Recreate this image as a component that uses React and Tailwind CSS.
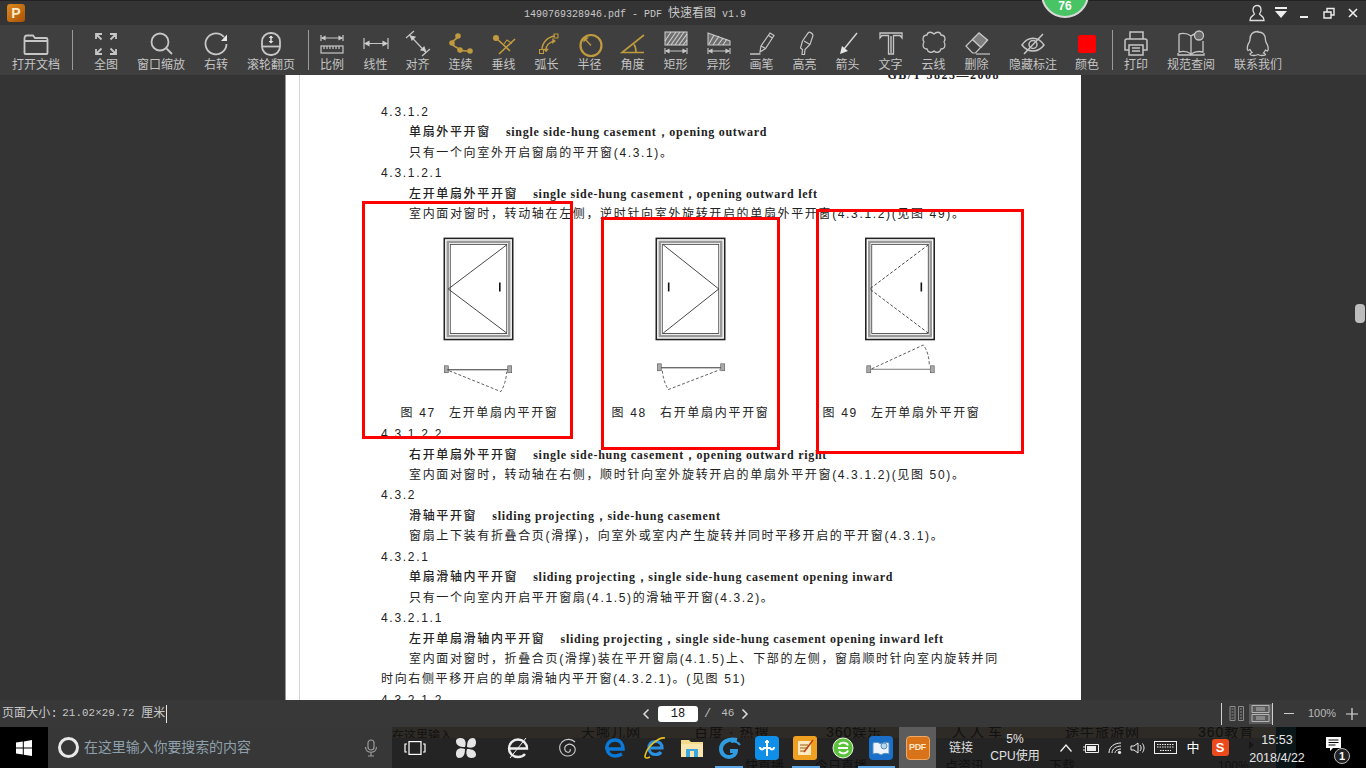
import React from "react";

const S = ({ children, c = "#c6c6c6", w = 1.6, fill = "none" }) => (
  <svg width="28" height="28" viewBox="0 0 28 28" fill={fill} stroke={c} strokeWidth={w} className="overflow-visible">
    {children}
  </svg>
);
const G = "#c09a3e";

const icons = {
  folder: <S w={1.8}><path d="M2.5 24V9.5c0-2 1-3 2.5-3h6l2 2.5h11c1 0 1.500 .7 1.500 1.500V24c0 .6-.5 1-1 1H3.500c-.6 0-1-.4-1-1zM2.500 12h23" /></S>,
  fit: <S w={1.8}><path d="M4 10V5h6M4 5l5.500 5.500M24 10V5h-6M24 5l-5.500 5.500M4 20v5h6M4 25l5.500-5.500M24 20v5h-6M24 25l-5.500-5.500" /></S>,
  zoom: <S w={1.8}><circle cx="13" cy="13" r="8.500" /><path d="M19.500 19.500L25 25" /></S>,
  rotate: <S w={1.8}><path d="M22 8a10.500 10.500 0 1 0 2.500 7" /><path d="M25 5.500v6.500h-6z" fill="#e8e8e8" stroke="none" /></S>,
  wheel: <S w={1.8}><rect x="5" y="4" width="18" height="22" rx="8.500" /><path d="M5 17.500h18" /><path d="M14 7v7" /><path d="M11.500 9L14 6.500 16.500 9zM11.500 12L14 14.500 16.500 12z" fill="#e0e0e0" stroke="none" /></S>,
  scale: <S w={1.2}><path d="M3 6v6M25 6v6M4 9h20" /><path d="M4 9l3-1.500v3zM24 9l-3-1.500v3z" fill="#ddd" /><rect x="3" y="17" width="22" height="7" /><path d="M6 17v3M9 17v3M12 17v3M15 17v3M18 17v3M21 17v3" /></S>,
  dim: <S w={1.2}><path d="M2 9v11M26 9v11M3 14.500h22" /><path d="M3 14.500l4-2v4zM25 14.500l-4-2v4z" fill="#ddd" /></S>,
  align: <S w={1.2}><path d="M2 9l8-7M18 27l8-7M5 5.500L22 23.500" /><path d="M6.500 7l4.500 1-3 3zM21.500 22l-4.500-1 3-3z" fill="#ddd" /></S>,
  cont: <S c={G} w={1.6}><path d="M11 7C10 11 5 11 5 14c0 4 5 3 8 7 3 1 7 1 10 1" /><circle cx="11" cy="7" r="2" fill={G} /><circle cx="5" cy="14" r="2" fill={G} /><circle cx="13" cy="21" r="2" fill={G} /><circle cx="23" cy="22" r="2" fill={G} /></S>,
  perp: <S c={G} w={1.7}><path d="M6 9l14 13M25 10L9 25" /><path d="M14 15l3-4 5 3.500" strokeWidth="1.100" /><circle cx="6" cy="9" r="2.200" fill={G} /></S>,
  arc: <S c={G} w={1.5}><path d="M9 21c0-7 5-13 13-14M13 21c0-4 3-8 9-9" /><rect x="6.500" y="20.500" width="4" height="4" strokeWidth="1" /><rect x="21" y="5" width="4" height="4" strokeWidth="1" /><path d="M22.500 12l-3-2.500v5zM13 23l-2.500-3h5z" fill={G} strokeWidth="0.500" /></S>,
  radius: <S c={G} w={2.2}><circle cx="15" cy="16.500" r="10.500" /><path d="M15 16.500L9 10" strokeWidth="1.300" /><path d="M7 8l6 .5-5.500 5z" fill={G} stroke="none" /></S>,
  angle: <S c={G} w={1.6}><path d="M25 6L3 23.500h22M15 15.500c1.500 2 2 5 2 8" /></S>,
  rect: <S w={1.100}><rect x="3" y="3" width="22" height="13" fill="#6e6e6e" /><path d="M5 16L14 3M9 16L18 3M13 16L22 3M17 16l8-11M21 16l4-5M3 12l6-9" stroke="#d0d0d0" /><path d="M3 19v6M25 19v6M4 22h20" /><path d="M4 22l3-1.500v3zM24 22l-3-1.500v3z" fill="#ddd" /></S>,
  trap: <S w={1.100}><path d="M3 4v12h22v-4z" fill="#6e6e6e" /><path d="M4 15L9 6M8 16l6-9M13 16l5-7M18 16l4-6" stroke="#d0d0d0" /><path d="M3 19v6M25 19v6M4 22h20" /><path d="M4 22l3-1.500v3zM24 22l-3-1.500v3z" fill="#ddd" /></S>,
  pen: <S w={1.200}><path d="M12 23l1-6 9-13 4 2.500-8.500 13zM20.500 6.500l4 2.500M13 17l4.500 2.500" /><path d="M2 25h10.500" strokeWidth="1.500" /></S>,
  marker: <S w={1.200}><path d="M11 25.500l.5-5-2-1.500 2-7 6-8.500c1-1 4.500 1 4.500 3l-3 9-5 5-.5 5zM13 12l6 3.500" /></S>,
  arrow: <S c="#d8d8d8" w={1.300}><path d="M23 4L10 20" /><path d="M6 25l2-8 6 5z" fill="#e6e6e6" stroke="none" /></S>,
  text: <S w={1.300}><path d="M3 9V4h22v5l-2-2.500h-6.500V25h-5V6.500H5z" /><path d="M13.500 7v17M14.500 7v17" strokeWidth="0.700" /></S>,
  cloud: <S w={1.300}><path d="M7 6c1-4 5-3 7-1 2-2 6-3 7 1 4 0 5 4 3 7 2 3 1 7-3 7-1 4-5 4-7 2-2 2-6 2-7-2-4 0-5-4-3-7-2-3-1-7 3-7z" /></S>,
  eraser: <S w={1.200}><path d="M3 17L16 4l8.500 7-12 13h-3zM9.500 10.500l8.500 8" /><path d="M16 4l8.500 7-6.500 7.500-8.500-8z" fill="#7e7e7e" /><path d="M13 25h14" /></S>,
  eye: <S w={1.500}><path d="M3 16c6-9 16-9 22 0-6 8-16 8-22 0z" /><circle cx="14" cy="15.500" r="4" /><path d="M5 25L24 5" /></S>,
  color: <div className="w-[18px] h-[18px] bg-[#ff0000] rounded-[2px] mt-[6px]" />,
  print: <S w={1.500}><path d="M8 10V3h13v7M7 21H3V12c0-1 1-2 2-2h18c1 0 2 1 2 2v9h-4" /><rect x="7" y="16" width="14" height="10" /><path d="M10 19h8M10 22h8" /></S>,
  book: <S w={1.300}><path d="M2 5c4-1 8-1 12 2 3-2 5-3 7-3v3M14 7v17M2 5v18c4-1 8-1 12 2 3-2 8-3 12-2V12M1 24v2h26v-2" /><circle cx="22" cy="6.500" r="4.500" fill="#6a6a6a" /></S>,
  qq: <S w={1.300}><path d="M14 3c5 0 7.500 3 7.500 8 0 2 1 3 2 5 1 3 1 5 0 6l-2-1c-.5 1-1 2-2 3 1 .5 2 1 2 1.500 0 1-2 1-4 1s-2.500-.5-3.500-1c-1 .5-2 1-4 1s-4-.5-4-1.500c0-.5 1-1 2-1.500-1-1-1.500-2-2-3l-2 1c-1-1-1-3 0-6 1-2 2-3 2-5 0-5 2.500-8 8-8z" /></S>,
};

const tools1 = [["全图", "fit", 66], ["窗口缩放", "zoom", 44], ["右转", "rotate", 66], ["滚轮翻页", "wheel", 44]];
const tools2 = [
  ["比例", "scale", 46], ["线性", "dim", 41], ["对齐", "align", 43], ["连续", "cont", 43], ["垂线", "perp", 43], ["弧长", "arc", 43], ["半径", "radius", 43],
  ["角度", "angle", 43], ["矩形", "rect", 43], ["异形", "trap", 43], ["画笔", "pen", 43], ["高亮", "marker", 43], ["箭头", "arrow", 43], ["文字", "text", 43],
  ["云线", "cloud", 43], ["删除", "eraser", 43], ["隐藏标注", "eye", 70], ["颜色", "color", 38],
];
const tools3 = [["打印", "print", 46], ["规范查阅", "book", 64], ["联系我们", "qq", 70]];

function Tool({ label, icon, w }) {
  return (
    <div className="flex flex-col items-center shrink-0 pt-[4px]" style={{ width: w }}>
      <div className="h-[28px] w-[28px] flex justify-center">{icons[icon]}</div>
      <div className="text-[12px] leading-[16px] text-[#c4c4c4] whitespace-nowrap">{label}</div>
    </div>
  );
}
const Sep = ({ cls }) => <div className={`w-px h-[40px] bg-[#9a9a9a] self-center shrink-0 ${cls}`} />;

const SANS = "font-['Liberation_Sans','Noto_Sans_CJK_SC',sans-serif]";

function Num({ t }) {
  return <div className="h-[20.45px] leading-[20.45px] pl-[95px] tracking-[1.7px] whitespace-nowrap">{t}</div>;
}
function Term({ cn, en }) {
  return (
    <div className="h-[20.45px] leading-[20.45px] pl-[123px] whitespace-nowrap flex">
      <span className="tracking-[1.65px] font-medium">{cn}</span>
      <span className="ml-[15px] font-['Liberation_Serif',serif] font-bold tracking-[0.72px] text-[12px]">{en}</span>
    </div>
  );
}
function Body({ t, pl = 123 }) {
  return <div className="h-[20.45px] leading-[20.45px] tracking-[1.65px] whitespace-nowrap" style={{ paddingLeft: pl }}>{t}</div>;
}

function Win({ dashed, mirror }) {
  const d = dashed ? "3 2" : undefined;
  return (
    <>
      <rect x="15" y="13.500" width="69" height="102" fill="none" stroke="#222" strokeWidth="1.600" />
      <rect x="18.500" y="17" width="62" height="95" fill="none" stroke="#9a9a9a" strokeWidth="2.500" />
      <rect x="21" y="19.500" width="57" height="90" fill="none" stroke="#333" strokeWidth="0.800" />
      {mirror ? (
        <path d="M22 20L78 64.500 22 109" fill="none" stroke="#333" strokeWidth="0.900" />
      ) : (
        <path d="M78 20L19 64.500 78 109" fill="none" stroke="#333" strokeWidth="0.900" strokeDasharray={d} />
      )}
      <path d={mirror ? "M27.500 58v9" : "M71 58v9"} stroke="#111" strokeWidth="1.600" />
    </>
  );
}
const Jamb = ({ x, y }) => <rect x={x} y={y} width="4" height="7" fill="#aaa" stroke="#555" strokeWidth="0.600" />;

const figs = [
  ["图 47", "左开单扇内平开窗",
    <svg key="a" width="100" height="178" viewBox="0 0 100 178" className="-translate-x-px">
      <Win />
      <Jamb x="15" y="142" /><Jamb x="79" y="142" />
      <path d="M18 146H79" stroke="#333" />
      <path d="M20 147l52 21q5-8 6-20" fill="none" stroke="#333" strokeWidth="0.800" strokeDasharray="3 2" />
    </svg>],
  ["图 48", "右开单扇内平开窗",
    <svg key="b" width="100" height="178" viewBox="0 0 100 178">
      <Win mirror />
      <Jamb x="16" y="140" /><Jamb x="80" y="140" />
      <path d="M20 144H80" stroke="#333" />
      <path d="M21 147q1 10 6 19l52-20" fill="none" stroke="#333" strokeWidth="0.800" strokeDasharray="3 2" />
    </svg>],
  ["图 49", "左开单扇外平开窗",
    <svg key="c" width="100" height="178" viewBox="0 0 100 178" className="-translate-x-[1.500px]">
      <Win dashed />
      <Jamb x="16" y="142" /><Jamb x="80" y="142" />
      <path d="M20 145.500H80" stroke="#777" />
      <path d="M21 145l52-24q6 8 6 21" fill="none" stroke="#333" strokeWidth="0.800" strokeDasharray="3 2" />
    </svg>],
];

const TI = ({ children, w = 38, cls = "" }) => (
  <div className={`flex items-center justify-center shrink-0 h-full ${cls}`} style={{ width: w }}>{children}</div>
);

export default function App() {
  return (
    <div className={`w-[1366px] h-[768px] overflow-hidden flex flex-col bg-[#343434] relative ${SANS}`}>
      {/* title bar */}
      <div className="h-[25px] shrink-0 bg-[#343434] border-t border-[#222] flex items-center relative">
        <div className="w-[18px] h-[18px] ml-[7px] rounded-[3px] bg-gradient-to-br from-[#e08a1e] to-[#a85206] flex items-center justify-center text-[14px] font-bold text-[#ffe9c8] leading-none">P</div>
        <div className="absolute left-[524px] top-[6px] font-['Liberation_Mono','Noto_Sans_CJK_SC',monospace] text-[10px] leading-[14px] text-[#c8c8c8] whitespace-nowrap">
          1490769328946.pdf - PDF <span className="text-[12px]">快速看图</span> v1.9
        </div>
        <div className="ml-auto flex items-center h-full">
          <svg width="16" height="18" viewBox="0 0 16 18" fill="none" stroke="#ddd" strokeWidth="1.300"><path d="M8 1.500c3 0 4 2.500 4 4.500 0 2-1 3-1.500 4 .5 1.500 4.500 2 4.500 6v.5H1V16c0-4 4-4.500 4.500-6C5 9 4 8 4 6c0-2 1-4.500 4-4.500z" /></svg>
          <svg width="14" height="12" viewBox="0 0 14 12" fill="#eee" className="ml-[9px]"><path d="M1 0h12v2H1zM1 4h12L7 11z" /></svg>
          <div className="w-[8px] h-[2px] bg-[#eee] ml-[12px] mt-[8px]" />
          <svg width="12" height="12" viewBox="0 0 12 12" fill="none" stroke="#eee" strokeWidth="1.400" className="ml-[15px]"><path d="M1 5h7v6H1zM4 5V1.500h7V8H8" /></svg>
          <svg width="12" height="12" viewBox="0 0 12 12" fill="none" stroke="#eee" strokeWidth="1.600" className="ml-[12px] mr-[7px]"><path d="M2 2l8 8M10 2l-8 8" /></svg>
        </div>
      </div>
      {/* green ball */}
      <div className="absolute left-[1041px] top-[-30px] w-[48px] h-[48px] rounded-full bg-[#48c464] border-2 border-[#d8d8d8] flex items-end justify-center pb-[2px] text-[12px] font-bold text-white leading-[15px] z-20">76</div>

      {/* toolbar */}
      <div className="h-[50px] shrink-0 bg-[#3f3f3f] flex relative z-10">
        <Tool label="打开文档" icon="folder" w={72} />
        <Sep />
        {tools1.map(([l, i, w]) => <Tool key={l} label={l} icon={i} w={w} />)}
        <Sep cls="ml-[15px]" />
        {tools2.map(([l, i, w]) => <Tool key={l} label={l} icon={i} w={w} />)}
        <Sep cls="ml-[6px]" />
        {tools3.map(([l, i, w]) => <Tool key={l} label={l} icon={i} w={w} />)}
      </div>

      {/* document area */}
      <div className="h-[625px] shrink-0 relative overflow-hidden">
        <div className="w-[796px] h-full ml-[285px] bg-white border-l border-[#999] relative overflow-hidden text-[12px] text-[#222]">
          <div className="absolute left-[13px] top-0 bottom-0 w-px bg-[#d4d4d4]" />
          <div className="-mt-[8px]">
            <div className="h-[35px] flex justify-end pr-[81px] font-['Liberation_Serif',serif] font-bold tracking-[1.500px] leading-[16px] text-[12px]">GB/T 5823—2008</div>
            <Num t="4.3.1.2" />
            <Term cn="单扇外平开窗" en="single side-hung casement，opening outward" />
            <Body t="只有一个向室外开启窗扇的平开窗(4.3.1)。" />
            <Num t="4.3.1.2.1" />
            <Term cn="左开单扇外平开窗" en="single side-hung casement，opening outward left" />
            <Body t="室内面对窗时，转动轴在左侧，逆时针向室外旋转开启的单扇外平开窗(4.3.1.2)(见图 49)。" />
            <div className="h-[199.500px] flex pl-[88px]">
              {figs.map(([n, c, svg]) => (
                <div key={n} className="w-[211px] shrink-0 flex flex-col items-center">
                  {svg}
                  <div className="h-[22px] leading-[22px] mt-[1px] whitespace-nowrap tracking-[1.700px]"><span className="mr-[13px]">{n}</span>{c}</div>
                </div>
              ))}
            </div>
            <Num t="4.3.1.2.2" />
            <Term cn="右开单扇外平开窗" en="single side-hung casement，opening outward right" />
            <Body t="室内面对窗时，转动轴在右侧，顺时针向室外旋转开启的单扇外平开窗(4.3.1.2)(见图 50)。" />
            <Num t="4.3.2" />
            <Term cn="滑轴平开窗" en="sliding projecting，side-hung casement" />
            <Body t="窗扇上下装有折叠合页(滑撑)，向室外或室内产生旋转并同时平移开启的平开窗(4.3.1)。" />
            <Num t="4.3.2.1" />
            <Term cn="单扇滑轴内平开窗" en="sliding projecting，single side-hung casement opening inward" />
            <Body t="只有一个向室内开启平开窗扇(4.1.5)的滑轴平开窗(4.3.2)。" />
            <Num t="4.3.2.1.1" />
            <Term cn="左开单扇滑轴内平开窗" en="sliding projecting，single side-hung casement opening inward left" />
            <Body t="室内面对窗时，折叠合页(滑撑)装在平开窗扇(4.1.5)上、下部的左侧，窗扇顺时针向室内旋转并同" />
            <Body pl={95} t="时向右侧平移开启的单扇滑轴内平开窗(4.3.2.1)。(见图 51)" />
            <Num t="4.3.2.1.2" />
          </div>
          {/* red annotations */}
          <div className="absolute left-[76px] top-[126px] w-[211px] h-[238px] border-[3px] border-[#ff0000]" />
          <div className="absolute left-[315px] top-[142px] w-[179px] h-[233px] border-[3px] border-[#ff0000]" />
          <div className="absolute left-[530px] top-[134px] w-[208px] h-[245px] border-[3px] border-[#ff0000]" />
        </div>
        <div className="absolute right-[1px] top-[229px] w-[10px] h-[19px] rounded-[4px] bg-[#bdbdbd]" />
      </div>

      {/* status bar */}
      <div className="h-[27px] shrink-0 bg-[#383838] flex items-center relative text-[12px] text-[#c8c8c8]">
        <div className="pl-[2px] flex items-center h-full whitespace-nowrap font-['Liberation_Mono','Noto_Sans_CJK_SC',monospace] text-[10.800px] tracking-[0.100px]">
          <span className="text-[12px] -mr-[2px]">页面大小:</span>&nbsp;21.02×29.72&nbsp;<span className="text-[12px]">厘米</span>
          <div className="w-px h-[18px] bg-[#e8e8e8] ml-[1px]" />
        </div>
        <div className="absolute left-[642px] top-0 h-full flex items-center font-['Liberation_Mono',monospace]">
          <svg width="8" height="12" viewBox="0 0 8 12" fill="none" stroke="#ddd" strokeWidth="1.500"><path d="M6.500 1.500L2 6l4.500 4.500" /></svg>
          <div className="ml-[8px] w-[40px] h-[16px] rounded-[3px] bg-white text-[#111] text-[12px] leading-[16px] text-center">18</div>
          <span className="ml-[6px] text-[#bbb]">/</span>
          <span className="ml-[10px] text-[#bbb] text-[11px]">46</span>
          <svg width="8" height="12" viewBox="0 0 8 12" fill="none" stroke="#ddd" strokeWidth="1.500" className="ml-[7px]"><path d="M1.500 1.500L6 6l-4.500 4.500" /></svg>
        </div>
        <div className="ml-auto flex items-center h-full">
          <div className="w-px h-[22px] bg-[#cfcfcf]" />
          <svg width="16" height="15" viewBox="0 0 16 15" fill="none" stroke="#8e8e8e" strokeWidth="1" className="ml-[7px]"><path d="M1 .5h5v14H1zM9.500 .5h5v14h-5zM2.500 3h2M2.500 6h2M2.500 9h2M2.500 12h2M11 3h2M11 6h2M11 9h2M11 12h2" /></svg>
          <div className="ml-[4px] w-[23px] h-[20px] bg-[#5a5a5a] flex items-center justify-center">
            <svg width="19" height="17" viewBox="0 0 19 17" fill="none" stroke="#b5b5b5" strokeWidth="1"><path d="M1 .5h17v7H1zM1 9.500h17v7H1zM5 3h9M5 5h9M5 12h9M5 14h9" /></svg>
          </div>
          <div className="w-px h-[22px] bg-[#cfcfcf]" />
          <div className="ml-[11px] w-[10px] h-px bg-[#ccc]" />
          <span className="ml-[14px] text-[11px] w-[26px] text-[#b8b8b8] font-['Liberation_Sans',sans-serif] whitespace-nowrap">100%</span>
          <svg width="12" height="12" viewBox="0 0 12 12" stroke="#ddd" strokeWidth="1.200" className="ml-[12px] mr-[8px]"><path d="M0 6h12M6 0v12" /></svg>
        </div>
      </div>

      {/* taskbar */}
      <div className="h-[41px] shrink-0 flex relative bg-[#242424] overflow-hidden">
        {/* blurred page showing through the bar */}
        <div className="absolute inset-0 text-[#111] text-[14px] leading-[16px] whitespace-nowrap">
          <div className="absolute left-0 right-0 top-0 h-[11px] bg-[#2e2a26] overflow-hidden">
            <span className="absolute left-[581px] top-[-3px] tracking-[1px]">天哪儿网</span>
            <span className="absolute left-[694px] top-[-3px] tracking-[1px]">百度 · 热搜</span>
            <span className="absolute left-[826px] top-[-3px] tracking-[1px]">360娱乐</span>
            <span className="absolute left-[952px] top-[-3px] tracking-[4px]">人人车</span>
            <span className="absolute left-[1065px] top-[-3px] tracking-[1px]">途牛旅游网</span>
            <span className="absolute left-[1198px] top-[-3px] tracking-[1px]">360教育</span>
            <span className="absolute left-[392px] top-[1px] text-[12px]">在这里输入</span>
          </div>
          <span className="absolute left-[745px] top-[31px] text-[13px]">快直播</span>
          <span className="absolute left-[815px] top-[31px] text-[13px]">今日直播</span>
          <span className="absolute left-[945px] top-[31px] text-[13px]">点资讯</span>
          <span className="absolute left-[1049px] top-[31px] text-[13px]">下载</span>
          <span className="absolute left-[1218px] top-[31px] text-[12px]">100%</span>
          <div className="absolute left-[715px] top-[39px] w-[28px] h-[2px] bg-[#5fa8e8]" />
          <div className="absolute left-[792px] top-[39px] w-[28px] h-[2px] bg-[#5fa8e8]" />
          <div className="absolute left-[858px] top-[39px] w-[37px] h-[2px] bg-[#5fa8e8]" />
          <div className="absolute left-[906px] top-[39px] w-[30px] h-[2px] bg-[#5fa8e8]" />
        </div>

        <div className="w-[48px] shrink-0 h-full bg-black flex items-center justify-center relative">
          <svg width="16" height="16" viewBox="0 0 16 16" fill="#fff"><path d="M0 2.500L6.800 1.500V7.500H0zM7.800 1.400L16 0V7.500H7.800zM0 8.500H6.800V14.500L0 13.500zM7.800 8.500H16V16L7.800 14.700z" /></svg>
        </div>
        <div className="w-[344px] shrink-0 h-full bg-[#373737] flex items-center relative">
          <div className="ml-[10px] w-[21px] h-[21px] rounded-full border-[3px] border-[#e8e8e8]" />
          <span className="ml-[5px] text-[14px] text-[#8ea0ab] whitespace-nowrap tracking-[-0.100px]">在这里输入你要搜索的内容</span>
          <svg width="14" height="18" viewBox="0 0 14 18" fill="none" stroke="#9a9a9a" strokeWidth="1.200" className="ml-auto mr-[14px]"><rect x="4" y="1" width="6" height="10" rx="3" /><path d="M1.500 8c0 7 11 7 11 0M7 13.500V17M4 17h6" /></svg>
        </div>

        <div className="relative flex items-center h-full">
          <TI w={46}><svg width="22" height="14" viewBox="0 0 22 14" fill="none" stroke="#fff" strokeWidth="1.200"><rect x="5" y=".6" width="12" height="12.800" /><path d="M3 3H1v8h2M19 3h2v8h-2" /></svg></TI>
          <TI w={56}>
            <svg width="22" height="22" viewBox="0 0 22 22" fill="#e6e6e6"><path d="M10 10C4 10 1 8 1 4c0-3 5-4 8-2 2 2 2 5 1 8zM12 10c0-6 2-9 6-9 3 0 4 5 2 8-2 2-5 2-8 1zM12 12c6 0 9 2 9 6 0 3-5 4-8 2-2-2-2-5-1-8zM10 12c0 6-2 9-6 9-3 0-4-5-2-8 2-2 5-2 8-1z" /></svg>
          </TI>
          <TI w={48}>
            <svg width="22" height="24" viewBox="0 0 22 24" fill="none" stroke="#eee" strokeWidth="2.400"><path d="M3 12.500h17c0-5-4-9-9-9-5 0-9 4-9 9s4 8.500 9 8.500c3 0 5.500-1 7-3" /><path d="M19 2L3 22" strokeWidth="1" /></svg>
          </TI>
          <TI w={52}>
            <svg width="20" height="20" viewBox="0 0 20 20" fill="none" stroke="#cfcfcf" strokeWidth="1.100"><path d="M17 4C14 1 8 0 4 4-.5 9 2 18 10 18c5 0 8-4 7-8-1-3-5-5-8-3-3 1-3 6 0 7 2 1 4-1 3-3" /></svg>
          </TI>
          <TI w={42}>
            <svg width="20" height="20" viewBox="0 0 20 20" fill="none" stroke="#0a78d7" strokeWidth="3.600"><path d="M2 11h16c0-5-3-9-8-9S1 6 2 11c.7 4 4 7 8 7 3 0 5-1 7-2" /></svg>
          </TI>
          <TI w={37}>
            <svg width="24" height="24" viewBox="0 0 24 24" fill="none"><path d="M6 12h13c0-4-2.500-6.500-6.500-6.500S6 8 6 12c0 4 3 6.500 6.500 6.500 2.500 0 4.500-1 5.500-2.500" stroke="#2b8fe0" strokeWidth="3.200" /><path d="M22 2C16 1 4 10 2 20c-.5 3 3 2 5 1" stroke="#e8c020" strokeWidth="1.600" /></svg>
          </TI>
          <TI w={38}>
            <svg width="22" height="18" viewBox="0 0 22 18"><path d="M0 1h8l2 2h12v15H0z" fill="#f4d98a" /><path d="M0 5h22v13H0z" fill="#f8e6ae" /><path d="M5 10h12v8H5z" fill="#3ca6e0" /><path d="M9 12h4v6H9z" fill="#f8e6ae" /></svg>
          </TI>
          <TI w={36}>
            <svg width="24" height="24" viewBox="0 0 24 24" fill="none" stroke="#2f9be0" strokeWidth="4"><path d="M20 4C12 2 4 6 4 13c0 5 4 8 8 8 4 0 7-3 7-6h-6" /><path d="M14 6c3-1 7 0 9 3" strokeWidth="2" /></svg>
          </TI>
          <TI w={40}>
            <div className="w-[24px] h-[24px] rounded-[4px] bg-[#0f8fe8] flex items-center justify-center">
              <svg width="18" height="18" viewBox="0 0 18 18" fill="none" stroke="#fff" strokeWidth="2"><path d="M9 1v16M2 8c0 3 3 3 4 1H12c1 2 4 2 4-1M7 3h4" /></svg>
            </div>
          </TI>
          <TI w={36}>
            <div className="w-[24px] h-[24px] rounded-[3px] bg-[#f0a020] flex items-center justify-center">
              <svg width="18" height="18" viewBox="0 0 18 18"><path d="M2 2h13v14H2z" fill="#fde9c0" /><path d="M4 6h8M4 9h8M4 12h5" stroke="#9a5a10" strokeWidth="1" /><path d="M17 1L8 13" stroke="#c04010" strokeWidth="1.500" /></svg>
            </div>
          </TI>
          <TI w={40}>
            <svg width="22" height="24" viewBox="0 0 22 24"><circle cx="11" cy="12" r="10" fill="#5cc23c" stroke="#e8f4e0" strokeWidth="1" /><path d="M6 12h10M7 8.500c3-3 8-2 9 1M7 15.500c3 3 8 2 9-1" fill="none" stroke="#fff" strokeWidth="1.800" /></svg>
          </TI>
          <TI w={36}>
            <div className="w-[24px] h-[24px] rounded-[4px] bg-[#1a6fc8] flex items-center justify-center">
              <svg width="18" height="16" viewBox="0 0 18 16" fill="none"><path d="M1 3c3-1 5-1 8 1 3-2 5-2 8-1v11c-3-1-5-1-8 1-3-2-5-2-8-1z" fill="#eef4fa" stroke="#5a90c0" /><circle cx="12" cy="6" r="3" fill="#bcd8ee" stroke="#5a90c0" /></svg>
            </div>
          </TI>
          <TI w={37} cls="bg-[#5c5c5c]">
            <div className="w-[24px] h-[24px] rounded-[4px] bg-[#d9731a] border border-[#f4a860] flex items-center justify-center text-[9px] font-bold text-[#ffe8cc] leading-none tracking-[-0.300px]">PDF</div>
          </TI>
          <TI w={50} cls="text-[12px] text-[#dcdcdc]">链接</TI>
          <div className="w-[58px] h-full shrink-0 flex flex-col items-center justify-center text-[12px] leading-[17px] text-[#e2e2e2]">
            <span>5%</span>
            <span className="whitespace-nowrap">CPU使用</span>
          </div>
          <TI w={24} cls="ml-[10px]"><svg width="12" height="8" viewBox="0 0 12 8" fill="none" stroke="#eee" strokeWidth="1.300"><path d="M.5 7.500L6 1l5.500 6.500" /></svg></TI>
          <TI w={25}><svg width="16" height="12" viewBox="0 0 16 12" fill="none" stroke="#eee" strokeWidth="1"><path d="M2.500 2.500h13v8h-13zM0 5h2.500M0 8h2.500" /><rect x="4" y="4" width="9" height="5" fill="#eee" stroke="none" /></svg></TI>
          <TI w={23}><svg width="14" height="12" viewBox="0 0 14 12" fill="none" stroke="#eee" strokeWidth="1"><path d="M1 11C1 5 6 1 13 1M4 11c0-4 4-7 9-7M7 11c0-2 3-4 6-4" /><circle cx="11.500" cy="10.500" r="1.200" fill="#eee" /></svg></TI>
          <TI w={24}><svg width="16" height="12" viewBox="0 0 16 12" fill="none" stroke="#eee" strokeWidth="1"><path d="M1 4h3l4-3v10L4 8H1zM10 3c1.500 2 1.500 4 0 6M12.500 1.500c2 3 2 6 0 9" /></svg></TI>
          <TI w={30}><svg width="23" height="13" viewBox="0 0 23 13" fill="none" stroke="#eee" strokeWidth="1"><rect x=".5" y=".5" width="22" height="12" /><path d="M3 3.500h17M3 6h17M6 9.500h11" strokeDasharray="1.500 1" /></svg></TI>
          <TI w={26} cls="text-[13px] text-white">中</TI>
          <TI w={28}><div className="w-[17px] h-[17px] bg-[#ea4a1c] rounded-[3px] flex items-center justify-center text-white text-[13px] font-bold leading-none">S</div></TI>
          <div className="w-[13px] shrink-0" />
          <div className="w-[60px] h-full shrink-0 relative flex flex-col items-center justify-center pt-[2px] text-[12.500px] leading-[18px] text-[#e6e6e6] whitespace-nowrap bg-[linear-gradient(90deg,transparent_29px,#0a1518_29px,#0a1518_49px,#000_49px)]">
            <span>15:53</span>
            <span>2018/4/22</span>
            <svg width="5" height="8" viewBox="0 0 5 8" fill="#161616" className="absolute left-[2px] top-[14px]"><path d="M0 0l5 4-5 4z" /></svg>
          </div>
        </div>
        <div className="flex-1 h-full bg-black relative flex items-center justify-center">
          <svg width="15" height="15" viewBox="0 0 15 15" fill="#fff" className="-translate-x-[3px] -translate-y-[3px]"><path d="M0 0h15v11H7l-3 3v-3H0z" /><path d="M2.500 3h10M2.500 5.500h10M2.500 8h7" stroke="#000" strokeWidth="1" /></svg>
          <div className="absolute left-[27px] top-[21px] w-[16px] h-[16px] rounded-full bg-[#222] border border-[#bbb] text-[11px] font-bold leading-[14px] text-center text-white">1</div>
        </div>
      </div>
    </div>
  );
}
